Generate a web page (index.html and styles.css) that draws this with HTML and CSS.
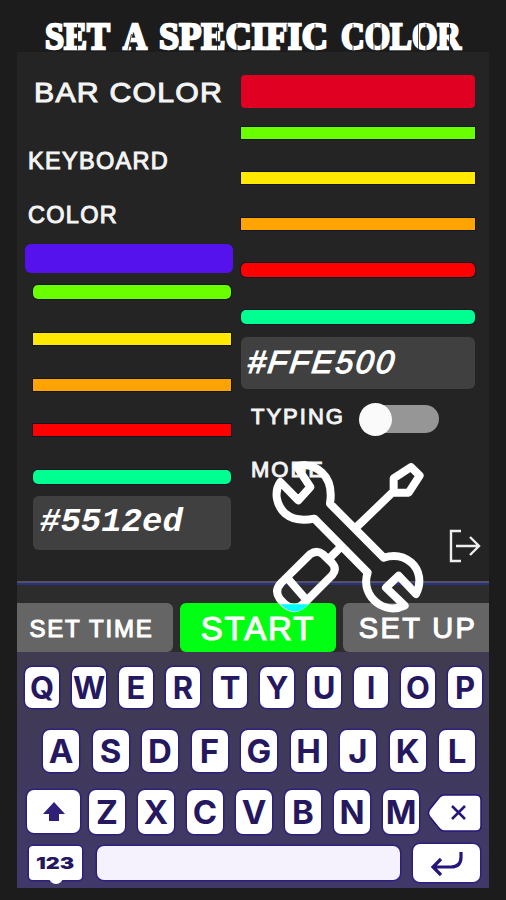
FILE: index.html
```html
<!DOCTYPE html>
<html lang="en">
<head>
<meta charset="utf-8">
<title>Set a specific color</title>
<link rel="stylesheet" href="styles.css">
</head>
<body>
<h1 class="title"><svg width="506" height="52" viewBox="0 0 506 52"><g class="stencil"><text x="45" y="49" textLength="65" lengthAdjust="spacingAndGlyphs">SET</text><text x="123" y="49" textLength="24" lengthAdjust="spacingAndGlyphs">A</text><text x="159" y="49" textLength="169" lengthAdjust="spacingAndGlyphs">SPECIFIC</text><text x="341" y="49" textLength="120" lengthAdjust="spacingAndGlyphs">COLOR</text></g>
<path class="cuts" d="M77.500 24V50M131.500 34L128 50M217.500 24V50M237 24V50M287 24V50M315 24V50M353 24V50M374 24V50M381 24V50M418.500 24V50M426 24V50M449.500 24V50"/></svg></h1>
<main class="phone">
  <section class="settings">
    <div class="col left">
      <div class="label bar-label">BAR COLOR</div>
      <div class="label kb-label">KEYBOARD<br>COLOR</div>
      <div class="swatch violet"></div>
      <div class="bars"><i class="bar green round"></i><i class="bar yellow"></i><i class="bar orange"></i><i class="bar red"></i><i class="bar mint round"></i></div>
      <div class="hex">#5512ed</div>
    </div>
    <div class="col right">
      <div class="swatch crimson"></div>
      <div class="bars"><i class="bar green"></i><i class="bar yellow"></i><i class="bar orange"></i><i class="bar red round"></i><i class="bar mint round"></i></div>
      <div class="hex sans"><span>#FFE500</span></div>
      <div class="typing"><div class="label mode-label">TYPING<br>MODE</div><div class="toggle"><span class="knob"></span></div></div>
      <svg class="exit" width="32" height="34" viewBox="0 0 32 34"><path d="M12 2H2V32H12M7 17H30M21 8L30 17L21 26"/></svg>
    </div>
  </section>
  <div class="rule"></div>
  <nav class="actions"><button class="btn time">SET TIME</button><button class="btn start">START</button><button class="btn setup">SET UP</button></nav>
  <section class="keyboard">
    <div class="row r1"><b>Q</b><b>W</b><b>E</b><b>R</b><b>T</b><b>Y</b><b>U</b><b>I</b><b>O</b><b>P</b></div>
    <div class="row r2"><b>A</b><b>S</b><b>D</b><b>F</b><b>G</b><b>H</b><b>J</b><b>K</b><b>L</b></div>
    <div class="row r3"><b class="shift"><svg width="24" height="22" viewBox="0 0 24 22"><path fill="#30207a" d="M12 1L23 13H17V20H7V13H1Z"/></svg></b><b>Z</b><b>X</b><b>C</b><b>V</b><b>B</b><b>N</b><b>M</b><svg class="back" width="56" height="40" viewBox="0 0 56 40"><path d="M17 2H49Q54 2 54 7V33Q54 38 49 38H17Q14 38 11 34L3 24Q0 20 3 16L11 6Q14 2 17 2Z" fill="#fff" stroke="#26157a" stroke-width="1.500"/><path d="M25 13L38 26M38 13L25 26" stroke="#26157a" stroke-width="2.500"/></svg></div>
    <div class="row r4"><b class="num"><span>123</span></b><b class="space"></b><b class="enter"><svg width="34" height="28" viewBox="0 0 34 28"><path d="M31 3V8Q31 18 21 18H4M11 10L3 18L11 26" fill="none" stroke="#26157a" stroke-width="3.200"/></svg></b></div>
  </section>
  <svg class="tools" width="256" height="220" viewBox="0 0 768 660">
    <g fill="none" stroke="#fff" stroke-width="24" stroke-linejoin="round" stroke-linecap="round">
      <path d="M88 123C67 154 77 195 103 218C128 239 160 239 190 233L350 395C338 430 350 468 383 489C410 506 438 505 461 494L405 440L443 404L495 459C513 424 506 387 480 364C456 344 427 341 398 350L237 188C243 150 239 119 213 95C190 74 162 68 137 76L178 138L142 178Z"/>
      <path d="M320 255L427 152M480 78L506 104L473 155H428V112ZM262 325L235 352M177 340Q198 325 216 340L243 366Q259 384 244 402L162 484Q132 515 101 489L86 473Q69 449 90 426ZM110 412L165 475"/>
    </g>
    <path d="M88 490H172Q133 534 88 490Z" fill="#0ff"/>
  </svg>
</main>
</body>
</html>
```
FILE: styles.css
```css
* { box-sizing: border-box; }
body { margin: 0; width: 506px; height: 900px; overflow: hidden; background: #1c1c1c; color: #fff; font-family: "Liberation Sans", Arial, sans-serif; }
.title { margin: 0; height: 52px; position: relative; z-index: 1; }
.title svg { display: block; overflow: visible; }
.stencil { font: bold 37.5px "Liberation Serif", serif; fill: #fff; stroke: #fff; stroke-width: 2.4px; }
.cuts { stroke: #1c1c1c; stroke-opacity: .8; stroke-width: 1; fill: none; }
.phone { position: relative; width: 472px; height: 836px; margin-left: 17px; background: #242424; }
.settings { display: flex; height: 529px; }
.col { display: flex; flex-direction: column; }
.left { width: 224px; padding-left: 9px; }
.right { width: 234px; padding-top: 23px; }
.label { color: #f4f4f4; white-space: nowrap; -webkit-text-stroke: 1px #f4f4f4; }
.bar-label { margin: 24px 0 0 8px; height: 31px; line-height: 33px; font-size: 27.5px; letter-spacing: 1.1px; transform: scaleX(1.1); transform-origin: left; }
.kb-label { height: 137px; margin-left: 2px; padding-top: 27px; line-height: 54px; font-size: 23.5px; letter-spacing: 1.3px; }
.swatch { flex: none; }
.violet { width: 208px; height: 29px; margin: 0 0 1px -1px; border-radius: 6px; background: #5512ed; }
.crimson { height: 33px; border-radius: 4px; background: #df0022; }
.bars { display: flex; flex-direction: column; justify-content: space-between; }
.bar { display: block; height: 12px; box-shadow: 0 0 0 1px #151525; }
.round { height: 14px; border-radius: 5px; }
.left .bars { width: 198px; height: 199px; margin: 11px 0 0 7px; }
.right .bars { height: 197px; margin-top: 19px; }
.green { background: #69ff00; }
.yellow { background: #ffe900; }
.orange { background: #ffa300; }
.red { background: #f00; }
.mint { background: #00ff91; }
.hex { background: #404040; border-radius: 6px; font: italic bold 34px "Liberation Mono", monospace; height: 52px; line-height: 50px; padding-left: 7px; margin-top: 13px; }
.hex.sans { font: italic 32px "Liberation Sans", sans-serif; line-height: 50px; letter-spacing: 2.4px; -webkit-text-stroke: 1.2px #fff; }
.hex span { display: inline-block; transform: skewX(-7deg); }
.left .hex { width: 198px; height: 54px; line-height: 53px; margin: 12px 0 0 7px; }
.typing { display: flex; }
.mode-label { margin-left: 10px; width: 109px; font-size: 22px; letter-spacing: 2px; line-height: 53px; position: relative; top: 1px; }
.toggle { width: 79px; height: 28px; margin-top: 16px; border-radius: 14px; background: #969696; }
.knob { display: block; width: 33px; height: 33px; margin: -2px 0 0 -1px; border-radius: 50%; background: #fafafa; }
.exit { margin: 34px 0 0 208px; fill: none; stroke: #eee; stroke-width: 2.4; }
.rule { height: 4px; background: linear-gradient(#565064 50%, #29317a 50%); }
.actions { display: flex; gap: 7px; height: 67px; padding-top: 18px; background: #2c2c2c; }
.btn { height: 49px; border: 0; padding: 2px 0 0; background: #656565; color: #fff; font-family: inherit; white-space: nowrap; -webkit-text-stroke: 1.1px #fff; }
.time { width: 156px; border-radius: 0 6px 6px 0; font-size: 24px; letter-spacing: 1.8px; padding-right: 7px; }
.start { width: 156px; border-radius: 6px; background: #00ff12; font-size: 33px; letter-spacing: 1.9px; }
.setup { width: 146px; border-radius: 6px 0 0 6px; font-size: 29px; letter-spacing: 2.4px; padding-left: 4px; }
.keyboard { height: 236px; background: linear-gradient(#403b50, #41386a); }
.row { display: flex; }
.row b { display: flex; align-items: center; justify-content: center; flex: none; background: #fff; color: #26185f; border-radius: 7px; box-shadow: 0 0 0 1.5px #2d207c; font: bold 31px Inter, sans-serif; }
.r1 { padding: 15px 0 0 8px; gap: 13px; }
.r1 b { width: 34px; height: 41px; }
.r2 { padding: 22px 0 0 26px; gap: 13.5px; }
.r2 b { width: 36px; height: 42px; font-size: 33px; }
.r3 { padding: 18px 0 0 10px; gap: 13px; }
.r3 b { width: 36px; height: 44px; font-size: 33px; }
.r3 .shift { width: 53px; height: 43px; margin-right: -4px; }
.back { margin: 3px 0 0 -5px; }
.r4 { padding: 10px 0 0 12px; align-items: center; }
.r4 .num { width: 53px; height: 34px; border-radius: 4px; font-size: 16px; position: relative; }
.num::after { content: ""; position: absolute; left: 20px; bottom: -4px; width: 14px; height: 8px; border-radius: 0 0 8px 8px; background: #fff; }
.num span { transform: scaleX(1.35); font-weight: 900; }
.r4 .space { width: 303px; height: 34px; margin-left: 15px; background: #f5f2fe; }
.r4 .enter { width: 67px; height: 38px; margin-left: 13px; }
.tools { position: absolute; left: 233.5px; top: 388.7px; pointer-events: none; }
```
